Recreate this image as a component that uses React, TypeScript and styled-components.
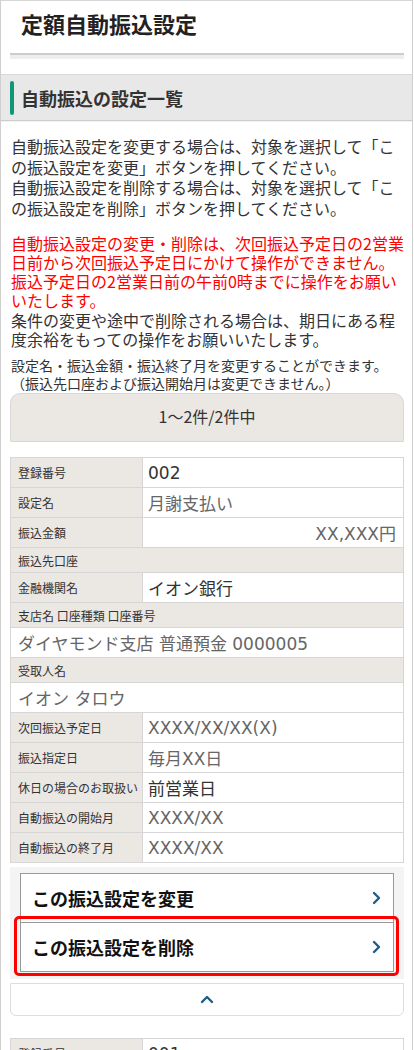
import React from "react";
import styled, { createGlobalStyle } from "styled-components";

const GlobalStyle = createGlobalStyle`
  html, body { margin: 0; padding: 0; background: #fff; }
  body { font-family: "Noto Sans CJK JP", "Noto Sans", sans-serif; color: #333; }
  * { box-sizing: border-box; }
`;

const Frame = styled.div`
  width: 413px;
  min-height: 1050px;
  border-left: 1px solid #cfcfcf;
  border-right: 1px solid #cfcfcf;
  border-top: 1px solid #d6d6d6;
  background: #fff;
`;

const Header = styled.header`
  padding: 7px 8px 0 9px;
`;

const Title = styled.h1`
  margin: 0;
  padding-left: 11px;
  font-size: 22px;
  line-height: 30px;
  font-weight: 700;
  color: #222;
`;

const Underline = styled.div`
  margin-top: 15px;
  height: 6px;
  border-top: 2px solid #cccccc;
  background: #eeeeee;
`;

const SectionHead = styled.h2`
  margin: 15px 0 0;
  height: 47px;
  display: flex;
  align-items: center;
  gap: 7px;
  padding-left: 9px;
  background: #e8e8e8;
  border-top: 1px solid #d9d9d9;
  border-bottom: 1px solid #cccccc;
  box-shadow: 0 1px 0 #f2f2f2;
  font-size: 18px;
  font-weight: 700;
  color: #333;
  &::before {
    content: "";
    display: block;
    width: 4px;
    height: 34px;
    border-radius: 2px;
    background: #12967a;
  }
`;

const Content = styled.main`
  padding: 0 8px 0 9px;
`;

const Para = styled.p<{ $lh: number; $mt: number; $size?: number }>`
  margin: ${(p) => p.$mt}px 0 0;
  padding-left: 1px;
  font-size: ${(p) => p.$size ?? 16}px;
  line-height: ${(p) => p.$lh}px;
  color: #333;
`;

const Warn = styled.span`
  color: #ff0000;
`;

const Pager = styled.div`
  margin-top: 1px;
  height: 49px;
  display: flex;
  align-items: center;
  justify-content: center;
  padding-bottom: 4px;
  background: #ebe7e3;
  border: 1px solid #d8d8d8;
  border-radius: 10px 10px 0 0;
  font-size: 16px;
  color: #333;
`;

const Table = styled.div<{ $mt: number }>`
  margin-top: ${(p) => p.$mt}px;
  display: grid;
  grid-template-columns: 131px 1fr;
  gap: 1px;
  padding: 1px;
  background: #d6d6d6;
`;

const Label = styled.div<{ $full?: boolean }>`
  grid-column: ${(p) => (p.$full ? "1 / -1" : "auto")};
  height: ${(p) => (p.$full ? 24 : 29)}px;
  display: flex;
  align-items: center;
  padding-left: 7px;
  background: #ebe7e3;
  font-size: 12px;
  color: #333;
  white-space: nowrap;
`;

const Value = styled.div<{ $full?: boolean; $dark?: boolean; $right?: boolean }>`
  grid-column: ${(p) => (p.$full ? "1 / -1" : "auto")};
  height: 29px;
  display: flex;
  align-items: center;
  justify-content: ${(p) => (p.$right ? "flex-end" : "flex-start")};
  padding: 0 7px 0 ${(p) => (p.$full ? 7 : 5)}px;
  background: #fff;
  font-family: "DejaVu Sans", "Noto Sans CJK JP", sans-serif;
  font-size: 17px;
  color: ${(p) => (p.$dark ? "#333" : "#666")};
  white-space: nowrap;
`;

const Actions = styled.div`
  position: relative;
  margin-top: 4px;
  padding: 6px 10px 7px;
  background: #f4f4f4;
  display: flex;
  flex-direction: column;
`;

const ActionButton = styled.button`
  height: 50px;
  display: flex;
  align-items: center;
  justify-content: space-between;
  padding: 0 12px 0 11px;
  background: #fff;
  border: 1px solid #999;
  font-family: inherit;
  font-size: 18px;
  font-weight: 700;
  color: #111;
  cursor: pointer;
  & + & { margin-top: -1px; }
`;

const Highlight = styled.div`
  position: absolute;
  left: 4px;
  top: 49px;
  width: 385px;
  height: 60px;
  border: 3px solid #ff0000;
  border-radius: 5px;
  pointer-events: none;
`;

const Collapse = styled.button`
  width: 100%;
  margin-top: 4px;
  height: 33px;
  display: flex;
  align-items: center;
  justify-content: center;
  background: #fff;
  border: 1px solid #dddddd;
  border-radius: 0 0 6px 6px;
  cursor: pointer;
`;

const ChevronRight = () => (
  <svg width="9" height="14" viewBox="0 0 9 14" aria-hidden>
    <polyline points="2,2 7,7 2,12" fill="none" stroke="#1d5d87" strokeWidth="2.4" strokeLinecap="round" strokeLinejoin="round" />
  </svg>
);

const ChevronUp = () => (
  <svg width="14" height="9" viewBox="0 0 14 9" aria-hidden>
    <polyline points="2,7 7,2 12,7" fill="none" stroke="#1d5d87" strokeWidth="2.4" strokeLinecap="round" strokeLinejoin="round" />
  </svg>
);

type Entry = { no: string };

const DetailTable = ({ no, mt }: { no: string; mt: number }) => (
  <Table $mt={mt}>
    <Label>登録番号</Label>
    <Value $dark>{no}</Value>
    <Label>設定名</Label>
    <Value>月謝支払い</Value>
    <Label>振込金額</Label>
    <Value $right>XX,XXX円</Value>
    <Label $full>振込先口座</Label>
    <Label>金融機関名</Label>
    <Value $dark>イオン銀行</Value>
    <Label $full>支店名 口座種類 口座番号</Label>
    <Value $full>ダイヤモンド支店 普通預金 0000005</Value>
    <Label $full>受取人名</Label>
    <Value $full>イオン タロウ</Value>
    <Label>次回振込予定日</Label>
    <Value>XXXX/XX/XX(X)</Value>
    <Label>振込指定日</Label>
    <Value>毎月XX日</Value>
    <Label>休日の場合のお取扱い</Label>
    <Value $dark>前営業日</Value>
    <Label>自動振込の開始月</Label>
    <Value>XXXX/XX</Value>
    <Label>自動振込の終了月</Label>
    <Value>XXXX/XX</Value>
  </Table>
);

const entries: Entry[] = [{ no: "002" }, { no: "001" }];

export default function App() {
  return (
    <>
      <GlobalStyle />
      <Frame>
        <Header>
          <Title>定額自動振込設定</Title>
          <Underline />
        </Header>
        <SectionHead>自動振込の設定一覧</SectionHead>
        <Content>
          <Para $lh={20.7} $mt={15}>
            自動振込設定を変更する場合は、対象を選択して「この振込設定を変更」ボタンを押してください。
            <br />
            自動振込設定を削除する場合は、対象を選択して「この振込設定を削除」ボタンを押してください。
          </Para>
          <Para $lh={19.2} $mt={15}>
            <Warn>
              自動振込設定の変更・削除は、次回振込予定日の2営業日前から次回振込予定日にかけて操作ができません。振込予定日の2営業日前の午前0時までに操作をお願いいたします。
            </Warn>
            <br />
            条件の変更や途中で削除される場合は、期日にある程度余裕をもっての操作をお願いいたします。
          </Para>
          <Para $lh={18} $mt={7} $size={14}>
            設定名・振込金額・振込終了月を変更することができます。
            <br />
            （振込先口座および振込開始月は変更できません。）
          </Para>
          <Pager>1〜2件/2件中</Pager>
          <DetailTable no={entries[0].no} mt={15} />
          <Actions>
            <ActionButton>
              この振込設定を変更
              <ChevronRight />
            </ActionButton>
            <ActionButton>
              この振込設定を削除
              <ChevronRight />
            </ActionButton>
            <Highlight />
          </Actions>
          <Collapse aria-label="閉じる">
            <ChevronUp />
          </Collapse>
          <DetailTable no={entries[1].no} mt={22} />
        </Content>
      </Frame>
    </>
  );
}
